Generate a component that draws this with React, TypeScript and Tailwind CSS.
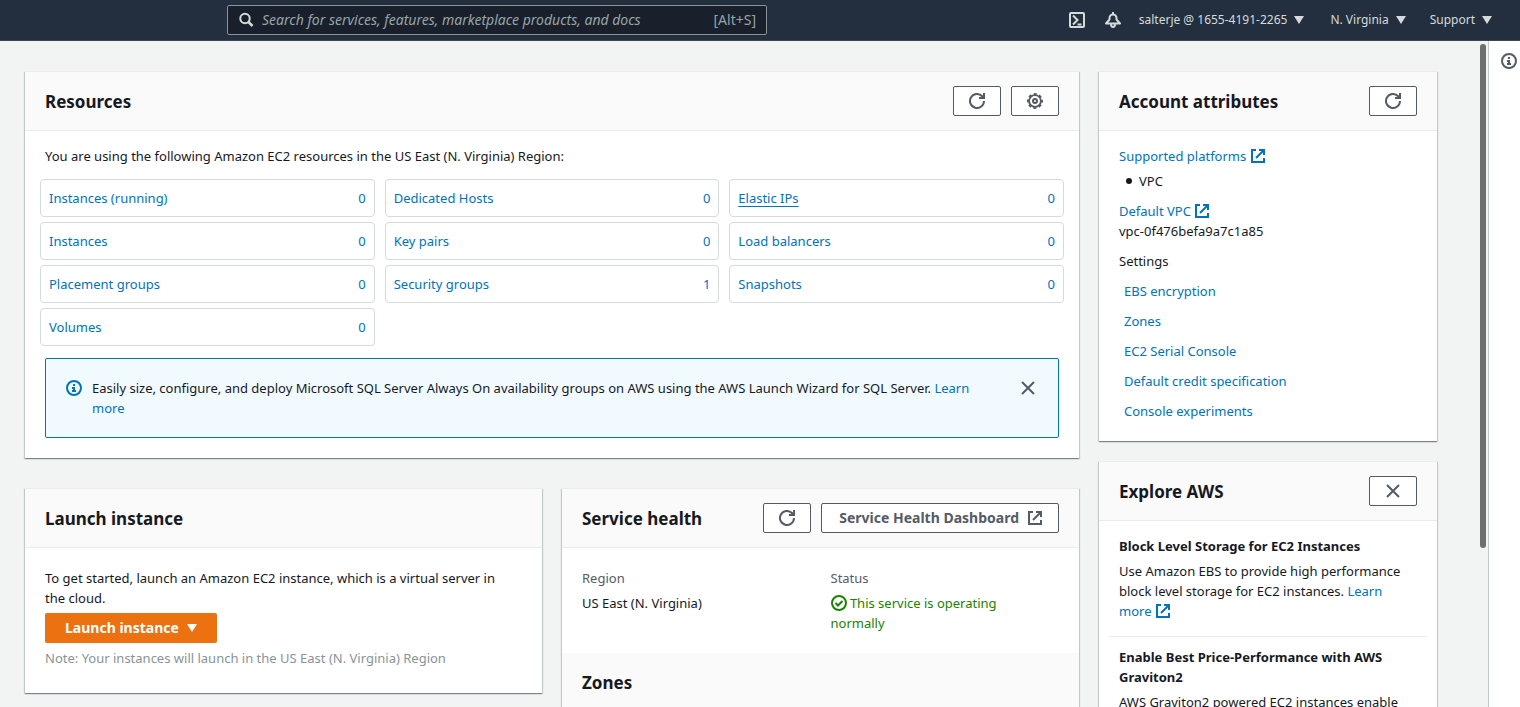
import type { ReactNode } from "react";

type IconProps = { className?: string };

function RefreshIcon() {
  return (
    <svg viewBox="0 0 16 16" className="size-4" fill="none" stroke="currentColor" strokeWidth="2" aria-hidden="true">
      <path d="M10 5h5V0" />
      <path d="M15 8a7 7 0 1 1-2.1-5L15 5" />
    </svg>
  );
}

function GearIcon() {
  return (
    <svg viewBox="0 0 16 16" className="size-4" fill="none" stroke="currentColor" strokeWidth="2" aria-hidden="true">
      <circle cx="8" cy="8" r="5.900" strokeWidth="1.800" />
      <circle cx="8" cy="8" r="7" strokeDasharray="3 2.498" strokeDashoffset="1.500" />
      <circle cx="8" cy="8" r="2" />
    </svg>
  );
}

function ExternalIcon({ className = "" }: IconProps) {
  return (
    <svg viewBox="0 0 16 16" className={"inline-block size-4 align-[-3px] " + className} fill="none" stroke="currentColor" strokeWidth="2" aria-hidden="true">
      <path d="M9 2h5v5M14 2 6 10" />
      <path d="M6 2H2v12h12v-4" />
    </svg>
  );
}

function CloseIcon() {
  return (
    <svg viewBox="0 0 16 16" className="size-4" fill="none" stroke="currentColor" strokeWidth="2" aria-hidden="true">
      <path d="m2 2 12 12M14 2 2 14" />
    </svg>
  );
}

function InfoIcon() {
  return (
    <svg viewBox="0 0 16 16" className="size-4 shrink-0" fill="none" stroke="currentColor" strokeWidth="2" aria-hidden="true">
      <circle cx="8" cy="8" r="7" />
      <path d="M8 12V8H6M6 11h4M8 4v2" />
    </svg>
  );
}

function CheckIcon() {
  return (
    <svg viewBox="0 0 16 16" className="inline-block size-4 align-[-3px]" fill="none" stroke="currentColor" strokeWidth="2" aria-hidden="true">
      <circle cx="8" cy="8" r="7" />
      <path d="m4.500 8 2.500 2.500L11.500 6" />
    </svg>
  );
}

function Caret() {
  return (
    <svg viewBox="0 0 10 8" className="h-2 w-2.5" fill="currentColor" aria-hidden="true">
      <path d="M0 0h10L5 8z" />
    </svg>
  );
}

function Link({ children, className = "" }: { children: ReactNode; className?: string }) {
  return (
    <a href="#" className={"text-[#0073bb] hover:underline " + className}>
      {children}
    </a>
  );
}

function IconButton({ label, children }: { label: string; children: ReactNode }) {
  return (
    <button type="button" aria-label={label} className="flex h-[30px] w-12 items-center justify-center rounded-[2px] border border-[#545b64] bg-white text-[#545b64]">
      {children}
    </button>
  );
}

function Card({ title, actions, children }: { title: string; actions?: ReactNode; children: ReactNode }) {
  return (
    <section className="border-t border-[#eaeded] bg-white shadow-[0_1px_1px_0_rgba(0,28,36,0.3),1px_1px_1px_0_rgba(0,28,36,0.15),-1px_1px_1px_0_rgba(0,28,36,0.15)]">
      <header className="flex h-[59px] items-center gap-2.5 border-b border-[#eaeded] bg-[#fafafa] px-5">
        <h2 className="mr-auto pt-0.5 text-[17px] font-bold">{title}</h2>
        {actions}
      </header>
      {children}
    </section>
  );
}

const resources: [string, number][] = [
  ["Instances (running)", 0],
  ["Dedicated Hosts", 0],
  ["Elastic IPs", 0],
  ["Instances", 0],
  ["Key pairs", 0],
  ["Load balancers", 0],
  ["Placement groups", 0],
  ["Security groups", 1],
  ["Snapshots", 0],
  ["Volumes", 0],
];

const settings = ["EBS encryption", "Zones", "EC2 Serial Console", "Default credit specification", "Console experiments"];

function TopBar() {
  return (
    <header className="flex h-[41px] shrink-0 items-center border-b border-[#414750] bg-[#232f3e] pr-7 pl-[227px] text-[#d5dbdb]">
      <label className="flex h-[30px] w-[540px] items-center gap-2 rounded-[2px] border border-[#879596] bg-[#1a202b] px-2.5">
        <svg viewBox="0 0 16 16" className="size-4 shrink-0" fill="none" stroke="currentColor" strokeWidth="2" aria-hidden="true">
          <circle cx="7" cy="6.500" r="4.700" />
          <path d="m10.500 10 4 4" strokeWidth="2.500" />
        </svg>
        <input
          type="search"
          aria-label="Search"
          placeholder="Search for services, features, marketplace products, and docs"
          className="min-w-0 flex-1 bg-transparent text-sm outline-none placeholder:text-[#95a5a6] placeholder:italic"
        />
        <span className="text-sm text-[#95a5a6]">[Alt+S]</span>
      </label>
      <nav className="ml-auto flex items-center text-xs">
        <button type="button" aria-label="CloudShell" className="mr-5">
          <svg viewBox="0 0 16 16" className="size-4" fill="none" stroke="currentColor" strokeWidth="2" aria-hidden="true">
            <rect x="1" y="1" width="14" height="14" rx="1" />
            <path d="m4 3.500 4.500 4.500L4 12.500M8.500 12.500h4" />
          </svg>
        </button>
        <button type="button" aria-label="Notifications" className="mr-[18px]">
          <svg viewBox="0 0 16 16" className="size-4" fill="none" stroke="currentColor" strokeWidth="2" aria-hidden="true">
            <path d="M8 0v2M1 11.500l3.500-4V6a3.500 3.500 0 0 1 7 0v1.500l3.500 4z" strokeLinejoin="round" />
            <path d="M6 12c0 4 4 4 4 0" />
          </svg>
        </button>
        <button type="button" className="mr-[26px] flex items-center gap-[7px]">
          salterje @ 1655-4191-2265 <Caret />
        </button>
        <button type="button" className="mr-6 flex items-center gap-[7px]">
          N. Virginia <Caret />
        </button>
        <button type="button" className="flex items-center gap-[7px]">
          Support <Caret />
        </button>
      </nav>
    </header>
  );
}

export default function App() {
  return (
    <div className="flex h-screen flex-col overflow-hidden bg-[#f2f3f3] font-['Noto_Sans','Open_Sans',sans-serif] text-[13px] leading-5 text-[#16191f]">
      <TopBar />
      <div className="flex min-h-0 flex-1">
        <main className="flex min-w-0 flex-1 items-start gap-5 overflow-y-auto pt-[30px] pr-[43px] pb-8 pl-[25px] [scrollbar-width:none]">
          <div className="flex min-w-0 flex-1 flex-col gap-[30px]">
            <Card
              title="Resources"
              actions={
                <>
                  <IconButton label="Refresh resources">
                    <RefreshIcon />
                  </IconButton>
                  <IconButton label="Resource settings">
                    <GearIcon />
                  </IconButton>
                </>
              }
            >
              <div className="px-5 pt-[15px] pb-5">
                <p>You are using the following Amazon EC2 resources in the US East (N. Virginia) Region:</p>
                <ul className="-mx-[5px] mt-[13px] grid grid-cols-3 gap-x-2.5 gap-y-[5px]">
                  {resources.map(([name, count]) => (
                    <li key={name} className="flex h-[38px] items-center justify-between rounded-[4px] border border-[#d5dbdb] px-2 text-[#0073bb]">
                      <Link className={name === "Elastic IPs" ? "underline underline-offset-[3px]" : ""}>{name}</Link>
                      <span>{count}</span>
                    </li>
                  ))}
                </ul>
                <div className="mt-3 flex items-start gap-2.5 rounded-[2px] border border-[#0073bb] bg-[#f1faff] px-5 py-[19px]">
                  <span className="pt-0.5 text-[#0073bb]">
                    <InfoIcon />
                  </span>
                  <p className="min-w-0 flex-1 pr-5">
                    Easily size, configure, and deploy Microsoft SQL Server Always On availability groups on AWS using the AWS Launch Wizard for SQL Server.{" "}
                    <Link>Learn more</Link>
                  </p>
                  <button type="button" aria-label="Dismiss" className="mr-0.5 pt-0.5 text-[#545b64]">
                    <CloseIcon />
                  </button>
                </div>
              </div>
            </Card>

            <div className="grid grid-cols-2 items-start gap-5">
              <Card title="Launch instance">
                <div className="px-5 pt-5 pb-[25px]">
                  <p className="pr-5">To get started, launch an Amazon EC2 instance, which is a virtual server in the cloud.</p>
                  <button type="button" className="mt-[5px] flex h-[30px] items-center gap-2 rounded-[2px] bg-[#ec7211] px-5 text-sm font-bold text-white">
                    Launch instance <Caret />
                  </button>
                  <p className="mt-[5px] text-[#879596]">Note: Your instances will launch in the US East (N. Virginia) Region</p>
                </div>
              </Card>

              <Card
                title="Service health"
                actions={
                  <>
                    <IconButton label="Refresh service health">
                      <RefreshIcon />
                    </IconButton>
                    <a href="#" className="flex h-[30px] items-center gap-2 rounded-[2px] border border-[#545b64] bg-white pr-[15px] pl-[17px] text-sm font-bold text-[#545b64]">
                      Service Health Dashboard <ExternalIcon />
                    </a>
                  </>
                }
              >
                <dl className="grid grid-cols-2 gap-5 px-5 py-5">
                  <div>
                    <dt className="text-[#545b64]">Region</dt>
                    <dd className="mt-[5px]">US East (N. Virginia)</dd>
                  </div>
                  <div>
                    <dt className="text-[#545b64]">Status</dt>
                    <dd className="mt-[5px] pr-8 text-[#1d8102]">
                      <CheckIcon /> This service is operating normally
                    </dd>
                  </div>
                </dl>
                <div className="flex h-[59px] items-center border-b border-[#eaeded] bg-[#fafafa] px-5">
                  <h2 className="pt-0.5 text-[17px] font-bold">Zones</h2>
                </div>
                <div className="h-24" />
              </Card>
            </div>
          </div>

          <div className="flex w-[338px] shrink-0 flex-col gap-5">
            <Card
              title="Account attributes"
              actions={
                <IconButton label="Refresh account attributes">
                  <RefreshIcon />
                </IconButton>
              }
            >
              <div className="px-5 pt-[15px] pb-5">
                <Link>
                  Supported platforms <ExternalIcon />
                </Link>
                <ul className="mt-[5px]">
                  <li className="flex items-center gap-[7px] pl-[7px]">
                    <span className="size-1.5 rounded-full bg-[#16191f]" aria-hidden="true" />
                    VPC
                  </li>
                </ul>
                <p className="mt-2.5">
                  <Link>
                    Default VPC <ExternalIcon />
                  </Link>
                </p>
                <p>vpc-0f476befa9a7c1a85</p>
                <h3 className="mt-2.5">Settings</h3>
                <ul className="mt-2.5 flex flex-col gap-2.5 pl-[5px]">
                  {settings.map((item) => (
                    <li key={item}>
                      <Link>{item}</Link>
                    </li>
                  ))}
                </ul>
              </div>
            </Card>

            <Card
              title="Explore AWS"
              actions={
                <IconButton label="Close Explore AWS">
                  <CloseIcon />
                </IconButton>
              }
            >
              <div className="divide-y divide-[#eaeded] px-2.5">
                <article className="px-2.5 pt-[15px] pb-[15px]">
                  <h3 className="font-bold">Block Level Storage for EC2 Instances</h3>
                  <p className="mt-[5px]">
                    Use Amazon EBS to provide high performance block level storage for EC2 instances.{" "}
                    <Link>
                      Learn more <ExternalIcon />
                    </Link>
                  </p>
                </article>
                <article className="px-2.5 pt-2.5 pb-[15px]">
                  <h3 className="font-bold">Enable Best Price-Performance with AWS Graviton2</h3>
                  <p className="mt-[5px]">AWS Graviton2 powered EC2 instances enable</p>
                </article>
              </div>
            </Card>
          </div>
        </main>
        <div className="w-2 shrink-0 pt-[3px]" aria-hidden="true">
          <div className="h-[76%] w-1.5 rounded-full bg-[#6f6f6f]" />
        </div>
        <aside className="flex w-8 shrink-0 justify-end border-l border-[#c5cbcb] bg-white pt-3 pr-[3px] text-[#545b64]">
          <button type="button" aria-label="Info" className="h-4">
            <InfoIcon />
          </button>
        </aside>
      </div>
    </div>
  );
}
